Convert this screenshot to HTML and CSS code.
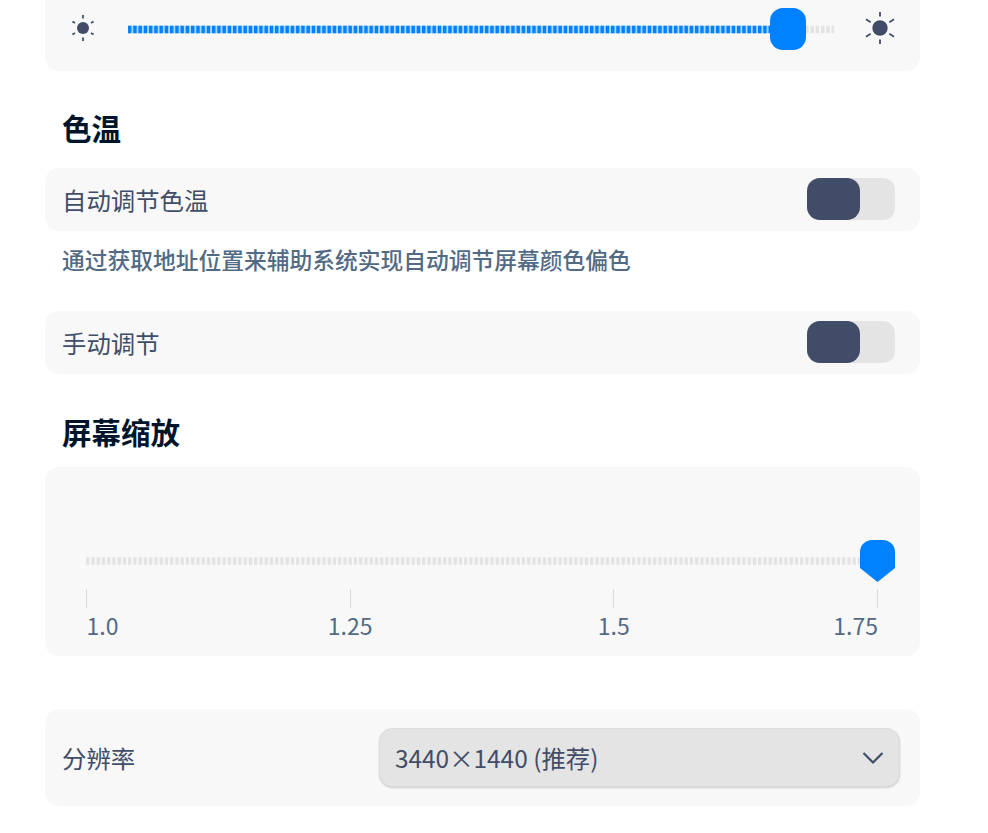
FILE: index.html
```html
<!DOCTYPE html>
<html lang="zh-CN">
<head>
<meta charset="utf-8">
<title>显示设置</title>
<link rel="stylesheet" href="styles.css">
</head>
<body>
<main class="page">
  <section class="card brightness">
    <svg class="sun sun-small" viewBox="0 0 26 26"><circle cx="13" cy="13" r="6"/><path d="M13 0v3.400M13 22.600V26M2.400 6.500l2.600 1.500M21 18l2.600 1.500M2.400 19.500L5 18M21 8l2.600-1.500"/></svg>
    <div class="track track-bright">
      <svg class="dots" viewBox="0 0 706 7">
        <line class="dash-grey" x1="0" y1="3.500" x2="706" y2="3.500"/>
        <line class="under-blue" x1="0" y1="3.500" x2="645" y2="3.500"/>
        <line class="dash-blue" x1="0" y1="3.500" x2="645" y2="3.500"/>
      </svg>
      <div class="thumb"></div>
    </div>
    <svg class="sun sun-large" viewBox="0 0 32 32"><circle cx="16" cy="16" r="7.700"/><path d="M16 0v4.500M16 27.500V32M2 7.300l4.700 2.900M25.300 21.800l4.700 2.900M2 24.700l4.700-2.900M25.300 10.200L30 7.300"/></svg>
  </section>

  <h2 class="title title-temp">色温</h2>
  <section class="card row">
    <span class="label">自动调节色温</span>
    <div class="toggle"><div class="knob"></div></div>
  </section>
  <p class="desc">通过获取地址位置来辅助系统实现自动调节屏幕颜色偏色</p>
  <section class="card row">
    <span class="label">手动调节</span>
    <div class="toggle"><div class="knob"></div></div>
  </section>

  <h2 class="title title-scale">屏幕缩放</h2>
  <section class="card scale">
    <div class="track track-scale">
      <svg class="dots" viewBox="0 0 792 7.500">
        <line class="dash-grey" x1="0" y1="3.750" x2="792" y2="3.750"/>
      </svg>
      <svg class="pin" viewBox="0 0 35 42"><path d="M12 0h11a12 12 0 0 1 12 12v16L17.500 42 0 28V12A12 12 0 0 1 12 0z"/></svg>
    </div>
    <div class="ticks"><i></i><i></i><i></i><i></i></div>
    <div class="tick-labels">
      <span class="tl tl-start">1.0</span>
      <span class="tl">1.25</span>
      <span class="tl">1.5</span>
      <span class="tl tl-end">1.75</span>
    </div>
  </section>

  <section class="card resolution">
    <span class="label res-label">分辨率</span>
    <div class="select">
      <span>3440×1440 (推荐)</span>
      <svg class="chev" viewBox="0 0 22 14"><path d="M1.500 2l9.500 9.500L20.500 2"/></svg>
    </div>
  </section>
</main>
</body>
</html>
```
FILE: styles.css
```css
* { box-sizing: border-box; }
html, body { margin: 0; padding: 0; background: #fff; }
body {
  width: 988px;
  height: 833px;
  overflow: hidden;
  font-family: "Noto Sans CJK SC", "Noto Sans", sans-serif;
  color: #414d68;
}
.page { width: 874.5px; margin-left: 45px; display: flex; flex-direction: column; }
.card { background: #f8f8f8; border-radius: 14px; }

.brightness {
  height: 71px;
  border-radius: 0 0 14px 14px;
  display: flex;
  align-items: center;
  padding: 0 0 13px 25px;
}
.sun { fill: #414d68; stroke: #414d68; flex: none; margin-bottom: 2px; overflow: visible; }
.sun path { fill: none; stroke-width: 1.8; }
.sun circle { stroke: none; }
.sun-small { width: 26px; height: 26px; }
.sun-large { width: 32px; height: 32px; }

.track { position: relative; height: 7px; }
.track-bright { width: 706px; margin: 0 30px 0 32px; flex: none; }
.dots { display: block; width: 100%; height: 100%; overflow: visible; }
.dots line { stroke-width: 7.5; }
.dash-grey { stroke: #e3e3e3; stroke-dasharray: 3.4 1.85; }
.under-blue { stroke: #a8d4fd; }
.dash-blue { stroke: #0081ff; stroke-dasharray: 3.4 1.85; }
.thumb {
  position: absolute;
  left: 642px;
  top: -18px;
  width: 36px;
  height: 42px;
  border-radius: 13px;
  background: #0081ff;
}

.title {
  margin: 0 0 0 17px;
  font-size: 29.5px;
  line-height: 40px;
  font-weight: 700;
  color: #00142a;
}
.title-temp { margin-top: 36px; margin-bottom: 21px; }
.title-scale { margin-top: 37px; margin-bottom: 16px; }

.row {
  height: 63px;
  display: flex;
  align-items: center;
  justify-content: space-between;
  padding: 0 24.5px 1px 17px;
}
.label { font-size: 24.4px; line-height: 34px; }
.row .label { margin-top: 2px; }
.toggle {
  width: 88px;
  height: 42px;
  border-radius: 12px;
  background: #e4e4e4;
}
.knob {
  width: 53px;
  height: 42px;
  border-radius: 13px;
  background: #414d68;
}
.desc {
  margin: 0;
  padding: 13px 0 0 17px;
  height: 80px;
  font-size: 22.75px;
  font-weight: 500;
  line-height: 32px;
  color: #526a84;
}

.scale { height: 189px; padding: 90px 41px 0; }
.track-scale { width: 792px; height: 8px; }
.pin { position: absolute; right: -17px; top: -17px; width: 35px; height: 42px; fill: #0081ff; }
.ticks { display: flex; justify-content: space-between; margin-top: 24px; width: 792px; }
.ticks i { width: 1px; height: 19px; background: #d9d9d9; display: block; }
.tick-labels {
  display: flex;
  width: 792px;
  height: 34px;
  margin-top: 0;
  font-size: 23px;
  line-height: 34px;
  color: #526a84;
  justify-content: space-between;
}
.tl { width: 1px; min-width: 0; flex: none; display: flex; justify-content: center; white-space: nowrap; }
.tl-start { justify-content: flex-start; padding-left: 0.5px; }
.tl-end { justify-content: flex-end; }

.resolution {
  height: 97px;
  margin-top: 53px;
  display: flex;
  align-items: center;
  padding: 0 19.5px 0 17px;
  justify-content: space-between;
}
.res-label { color: #414d68; }
.select {
  width: 521px;
  height: 59.5px;
  border-radius: 14px;
  background: #e4e4e4;
  border: 1px solid #dcdcdc;
  box-shadow: 0 1px 2px rgba(0, 0, 0, 0.18);
  display: flex;
  align-items: center;
  justify-content: space-between;
  padding: 0 15px;
  font-size: 24.4px;
  color: #414d68;
}
.chev { width: 22px; height: 14px; fill: none; stroke: #414d68; stroke-width: 2.2; }
```
